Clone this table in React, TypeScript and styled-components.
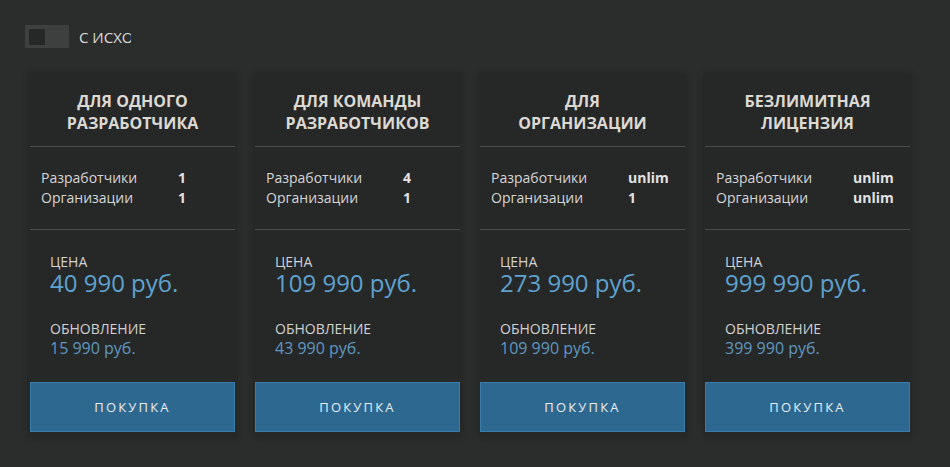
import React, { useState } from 'react'
import styled, { createGlobalStyle } from 'styled-components'

const GlobalStyle = createGlobalStyle`
  html, body {
    margin: 0;
    padding: 0;
    background: #2b2c2c;
    font-family: 'Open Sans', 'Noto Sans', sans-serif;
  }
`

const Page = styled(`div`)`
  padding: 25px 0 0 28px;
  min-height: 467px;
  box-sizing: border-box;
`

const ToggleRow = styled(`label`)`
  display: flex;
  align-items: center;
  gap: 10px;
  margin-left: -3px;
  height: 23px;
  cursor: pointer;
`

const Track = styled(`span`)<{ on: boolean }>`
  display: flex;
  justify-content: ${props => (props.on ? 'flex-end' : 'flex-start')};
  width: 44px;
  height: 23px;
  padding: 4px;
  box-sizing: border-box;
  background: #3e3f3f;
`

const Knob = styled(`span`)`
  width: 16px;
  height: 16px;
  background: #262727;
`

const ToggleText = styled(`span`)`
  width: 52px;
  overflow: hidden;
  white-space: nowrap;
  color: #dcdcdc;
  font-size: 15px;
`

const Cards = styled(`div`)`
  display: flex;
  gap: 16px;
  margin-top: 25px;
`

const Card = styled(`div`)`
  width: 209px;
  padding: 0 2px 5px;
  box-sizing: border-box;
  background: #262727;
  box-shadow: 0 0 6px rgba(0, 0, 0, 0.18);
  display: flex;
  flex-direction: column;
`

const Title = styled(`h3`)`
  margin: 0;
  padding: 17px 8px 12px;
  text-align: center;
  color: #dcd9d3;
  font-size: 16px;
  font-weight: 700;
  line-height: 22px;
  border-bottom: 1px solid #4a4b4b;
`

const Specs = styled(`div`)`
  padding: 21px 11px;
  border-bottom: 1px solid #4a4b4b;
`

const SpecRow = styled(`div`)`
  display: grid;
  grid-template-columns: 137px 1fr;
  font-size: 14px;
  line-height: 20px;
  color: #d6d6d6;

  b {
    font-weight: 700;
    color: #e2e2e2;
  }
`

const Prices = styled(`div`)`
  padding: 24px 20px 24px;
`

const Label = styled(`div`)<{ gap?: number }>`
  margin-top: ${props => props.gap || 0}px;
  font-size: 14px;
  line-height: 16px;
  color: #d2d2d2;
  text-transform: uppercase;
`

const Amount = styled(`div`)<{ big?: boolean }>`
  margin-top: ${props => (props.big ? '0' : '1px')};
  font-size: ${props => (props.big ? '24px' : '16px')};
  line-height: ${props => (props.big ? '26px' : '20px')};
  color: ${props => (props.big ? '#5ea3d0' : '#5f98c0')};
`

const BuyButton = styled(`button`)`
  height: 50px;
  border: 1px solid #3a7cab;
  background: #2d6891;
  color: #e9edf0;
  font-family: inherit;
  font-size: 13px;
  letter-spacing: 2.2px;
  text-transform: uppercase;
  cursor: pointer;
`

type Plan = {
  title: string[]
  devs: string
  orgs: string
  price: string
  update: string
}

const plans: Plan[] = [
  { title: ['Для одного', 'разработчика'], devs: '1', orgs: '1', price: '40 990 руб.', update: '15 990 руб.' },
  { title: ['Для команды', 'разработчиков'], devs: '4', orgs: '1', price: '109 990 руб.', update: '43 990 руб.' },
  { title: ['Для', 'организации'], devs: 'unlim', orgs: '1', price: '273 990 руб.', update: '109 990 руб.' },
  { title: ['Безлимитная', 'лицензия'], devs: 'unlim', orgs: 'unlim', price: '999 990 руб.', update: '399 990 руб.' },
]

function App() {
  const [source, setSource] = useState(false)

  return (
    <Page>
      <GlobalStyle />
      <ToggleRow onClick={() => setSource(!source)}>
        <Track on={source}>
          <Knob />
        </Track>
        <ToggleText>С ИСХОДНЫМ КОДОМ</ToggleText>
      </ToggleRow>
      <Cards>
        {plans.map(p => (
          <Card key={p.price}>
            <Title>
              {p.title[0].toUpperCase()}
              <br />
              {p.title[1].toUpperCase()}
            </Title>
            <Specs>
              <SpecRow>
                <span>Разработчики</span>
                <b>{p.devs}</b>
              </SpecRow>
              <SpecRow>
                <span>Организации</span>
                <b>{p.orgs}</b>
              </SpecRow>
            </Specs>
            <Prices>
              <Label>Цена</Label>
              <Amount big>{p.price}</Amount>
              <Label gap={25}>Обновление</Label>
              <Amount>{p.update}</Amount>
            </Prices>
            <BuyButton>Покупка</BuyButton>
          </Card>
        ))}
      </Cards>
    </Page>
  )
}

export default App
